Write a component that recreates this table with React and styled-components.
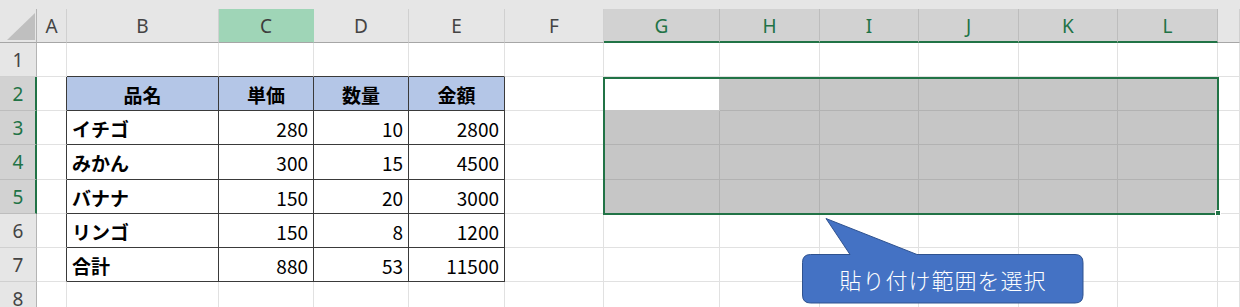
import React from "react";
import styled, { createGlobalStyle, css } from "styled-components";

const GlobalStyle = createGlobalStyle`
  html, body {
    margin: 0;
    padding: 0;
    background: #ffffff;
    overflow: hidden;
  }
  * { box-sizing: border-box; }
`;

const GREEN = "#217346";
const GRID = "#e1e1e1";
const TABLE_LINE = "#3a3a3a";
const SEL_GRID = "#b2b2b2";

const COLUMNS = [
  { key: "A", width: 30 },
  { key: "B", width: 152 },
  { key: "C", width: 95 },
  { key: "D", width: 95 },
  { key: "E", width: 96 },
  { key: "F", width: 99 },
  { key: "G", width: 116 },
  { key: "H", width: 100 },
  { key: "I", width: 99 },
  { key: "J", width: 100 },
  { key: "K", width: 99 },
  { key: "L", width: 100 },
  { key: "", width: 22 },
];

const ROW_HEIGHTS = [34, 34, 34, 35, 34, 34, 34, 34];

// table B2:E7 (column indices 1..4, rows 2..7)
const TABLE = { c0: 1, c1: 4, r0: 2, r1: 7 };
// selected range G2:L5, active cell G2
const SEL = { c0: 6, c1: 11, r0: 2, r1: 5 };

const TABLE_ROWS = [
  { name: "品名", values: ["単価", "数量", "金額"], head: true },
  { name: "イチゴ", values: [280, 10, 2800] },
  { name: "みかん", values: [300, 15, 4500] },
  { name: "バナナ", values: [150, 20, 3000] },
  { name: "リンゴ", values: [150, 8, 1200] },
  { name: "合計", values: [880, 53, 11500] },
];

const Sheet = styled.div`
  position: relative;
  width: 1240px;
  font-family: "Noto Sans CJK JP", "Noto Sans", sans-serif;
`;

const TopStrip = styled.div`
  height: 9px;
  background: #e6e6e6;
`;

const Grid = styled.div`
  display: grid;
  grid-template-columns: 37px ${COLUMNS.map((c) => `${c.width}px`).join(" ")};
  grid-template-rows: 34px ${ROW_HEIGHTS.map((h) => `${h}px`).join(" ")};
`;

const HeaderBase = css`
  display: flex;
  align-items: center;
  justify-content: center;
  font-family: "Noto Sans", "Open Sans", sans-serif;
  font-size: 19px;
  color: #444444;
  background: #e6e6e6;
`;

const CornerCell = styled.div`
  ${HeaderBase};
  position: relative;
  border-right: 1px solid #b4b4b4;
  border-bottom: 1px solid #a6a6a6;
`;

const CornerTriangle = styled.div`
  position: absolute;
  left: 7px;
  top: 4px;
  width: 28px;
  height: 27px;
  background: #bfbfbf;
  clip-path: polygon(100% 0, 100% 100%, 0 100%);
`;

const ColHeader = styled.div`
  ${HeaderBase};
  border-right: 1px solid #d0d0d0;
  border-bottom: 1px solid #a6a6a6;
  ${(p) =>
    p.$state === "active" &&
    css`
      background: #9fd5b7;
      border-right-color: #9fd5b7;
      color: #3d3d3d;
    `}
  ${(p) =>
    p.$state === "selected" &&
    css`
      background: #d2d2d2;
      color: ${GREEN};
      border-right-color: #bdbdbd;
      border-bottom: 2px solid ${GREEN};
      padding-top: 1px;
    `}
`;

const RowHeader = styled.div`
  ${HeaderBase};
  border-right: 1px solid #b4b4b4;
  border-bottom: 1px solid #d0d0d0;
  ${(p) =>
    p.$selected &&
    css`
      background: #d2d2d2;
      color: ${GREEN};
      border-right: 2px solid ${GREEN};
      border-bottom-color: #bdbdbd;
      padding-left: 1px;
    `}
`;

const Cell = styled.div`
  display: flex;
  align-items: center;
  justify-content: ${(p) =>
    p.$align === "right" ? "flex-end" : p.$align === "center" ? "center" : "flex-start"};
  padding: 1px 5px 0;
  font-size: 19px;
  font-weight: ${(p) => (p.$bold ? 700 : 400)};
  color: #000000;
  white-space: nowrap;
  background: ${(p) => p.$bg};
  border-right: 1px solid ${(p) => p.$right};
  border-bottom: 1px solid ${(p) => p.$bottom};
`;

const SelectionFrame = styled.div`
  position: absolute;
  left: 603px;
  top: 77px;
  width: 616px;
  height: 138px;
  border: 2px solid ${GREEN};
  pointer-events: none;
`;

const FillHandle = styled.div`
  position: absolute;
  left: 1215px;
  top: 210px;
  width: 6px;
  height: 6px;
  background: ${GREEN};
  border: 1px solid #ffffff;
`;

const Callout = styled.div`
  position: absolute;
  left: 802px;
  top: 218px;
  width: 282px;
  height: 86px;
`;

const CalloutShape = styled.svg`
  position: absolute;
  inset: 0;
  display: block;
`;

const CalloutLabel = styled.div`
  position: absolute;
  left: 0;
  right: 0;
  top: 36px;
  height: 49px;
  display: flex;
  align-items: center;
  justify-content: center;
  color: #ffffff;
  font-family: "Noto Sans CJK JP", sans-serif;
  font-weight: 300;
  font-size: 22px;
  letter-spacing: 1px;
`;

const inTable = (r, c) => r >= TABLE.r0 && r <= TABLE.r1 && c >= TABLE.c0 && c <= TABLE.c1;
const inSel = (r, c) => r >= SEL.r0 && r <= SEL.r1 && c >= SEL.c0 && c <= SEL.c1;

function cellStyle(r, c) {
  let right = GRID;
  let bottom = GRID;
  let bg = "#ffffff";

  if (r >= TABLE.r0 && r <= TABLE.r1 && c >= TABLE.c0 - 1 && c <= TABLE.c1) right = TABLE_LINE;
  if (c >= TABLE.c0 && c <= TABLE.c1 && r >= TABLE.r0 - 1 && r <= TABLE.r1) bottom = TABLE_LINE;

  if (inSel(r, c)) {
    right = SEL_GRID;
    bottom = SEL_GRID;
    const active = r === SEL.r0 && c === SEL.c0;
    bg = active ? "#ffffff" : "#c6c6c6";
    if (active) {
      right = "#c6c6c6";
      bottom = "#c6c6c6";
    }
  }
  if (r === TABLE.r0 && inTable(r, c)) bg = "#b4c6e7";
  return { right, bottom, bg };
}

function cellContent(r, c) {
  if (!inTable(r, c)) return null;
  const row = TABLE_ROWS[r - TABLE.r0];
  if (c === TABLE.c0) {
    return { text: row.name, bold: true, align: row.head ? "center" : "left" };
  }
  const v = row.values[c - TABLE.c0 - 1];
  return row.head
    ? { text: v, bold: true, align: "center" }
    : { text: v, bold: false, align: "right" };
}

function headerState(key) {
  if (key === "C") return "active";
  const idx = COLUMNS.findIndex((c) => c.key === key);
  if (key && idx >= SEL.c0 && idx <= SEL.c1) return "selected";
  return "normal";
}

export default function App() {
  const rows = ROW_HEIGHTS.map((_, i) => i + 1);
  return (
    <>
      <GlobalStyle />
      <Sheet>
        <TopStrip />
        <Grid>
          <CornerCell>
            <CornerTriangle />
          </CornerCell>
          {COLUMNS.map((col, i) => (
            <ColHeader key={`h${i}`} $state={headerState(col.key)}>
              {col.key}
            </ColHeader>
          ))}
          {rows.map((r) => (
            <React.Fragment key={r}>
              <RowHeader $selected={r >= SEL.r0 && r <= SEL.r1}>{r}</RowHeader>
              {COLUMNS.map((col, c) => {
                const s = cellStyle(r, c);
                const content = cellContent(r, c);
                return (
                  <Cell
                    key={`${r}-${c}`}
                    $bg={s.bg}
                    $right={s.right}
                    $bottom={s.bottom}
                    $align={content?.align}
                    $bold={content?.bold}
                  >
                    {content?.text}
                  </Cell>
                );
              })}
            </React.Fragment>
          ))}
        </Grid>

        <SelectionFrame />
        <FillHandle />

        <Callout>
          <CalloutShape width="282" height="86" viewBox="0 0 282 86">
            <path
              d="M 8.5 36.5 L 48 36.5 L 24 0.5 L 115 36.5 L 273 36.5 Q 281 36.5 281 44.5 L 281 77 Q 281 85 273 85 L 8.5 85 Q 0.5 85 0.5 77 L 0.5 44.5 Q 0.5 36.5 8.5 36.5 Z"
              fill="#4472c4"
              stroke="#2f528f"
              strokeWidth="1"
            />
          </CalloutShape>
          <CalloutLabel>貼り付け範囲を選択</CalloutLabel>
        </Callout>
      </Sheet>
    </>
  );
}
